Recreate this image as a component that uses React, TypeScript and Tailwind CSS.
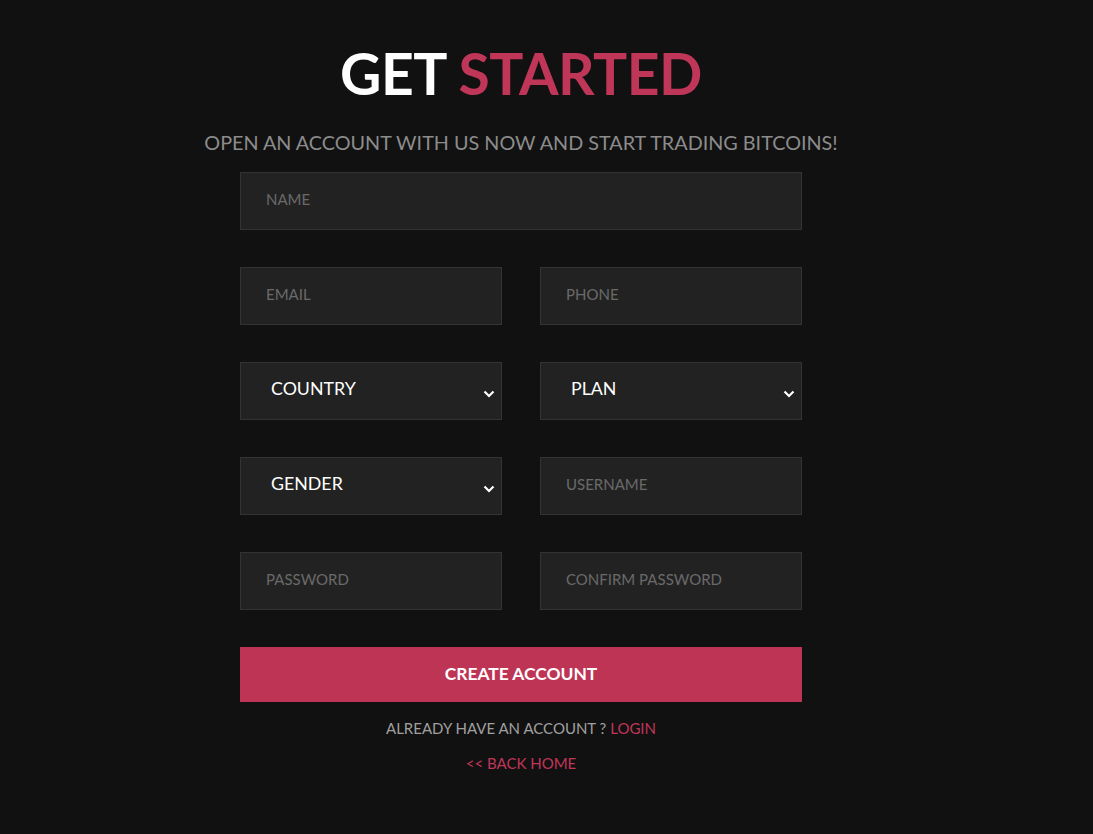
import React from "react";

const font = { fontFamily: "Lato, 'Open Sans', sans-serif" };

function Input({ label }: { label: string }) {
  return (
    <div className="h-[58px] w-full border border-[#333333] bg-[#222222] flex items-center pl-[25px] pb-[4px] text-[15px] text-[#6a6a6a]">
      {label}
    </div>
  );
}

function Select({ label }: { label: string }) {
  return (
    <div className="h-[58px] w-full border border-[#333333] bg-[#222222] flex items-center justify-between pl-[30px] pr-[6px] text-[17.8px] text-white">
      <span className="-mt-[5px]">{label}</span>
      <svg width="12" height="8" viewBox="0 0 12 8" className="mt-[5px]">
        <path d="M1.5 1.5 L6 6 L10.5 1.5" fill="none" stroke="#ffffff" strokeWidth="2.2" />
      </svg>
    </div>
  );
}

export default function App() {
  return (
    <div className="min-h-[834px] w-full bg-[#111111]" style={font}>
      <div className="w-[1042px] flex flex-col items-center pt-[37px]">
        <h1 className="text-[57px] font-bold leading-[72px] tracking-[-0.5px]">
          <span className="text-white">GET </span>
          <span className="text-[#c03659]">STARTED</span>
        </h1>
        <p className="mt-[19px] text-[19.8px] leading-[28px] text-[#8c8c8c]">
          OPEN AN ACCOUNT WITH US NOW AND START TRADING BITCOINS!
        </p>
        <div className="mt-[16px] w-[562px] flex flex-col gap-[37px]">
          <Input label="NAME" />
          <div className="grid grid-cols-2 gap-[38px]">
            <Input label="EMAIL" />
            <Input label="PHONE" />
          </div>
          <div className="grid grid-cols-2 gap-[38px]">
            <Select label="COUNTRY" />
            <Select label="PLAN" />
          </div>
          <div className="grid grid-cols-2 gap-[38px]">
            <Select label="GENDER" />
            <Input label="USERNAME" />
          </div>
          <div className="grid grid-cols-2 gap-[38px]">
            <Input label="PASSWORD" />
            <Input label="CONFIRM PASSWORD" />
          </div>
          <button className="h-[55px] w-full bg-[#be3455] text-white text-[17.4px] font-bold">
            CREATE ACCOUNT
          </button>
        </div>
        <p className="mt-[16px] text-[15px] leading-[20px] text-[#a0a0a0]">
          ALREADY HAVE AN ACCOUNT ? <span className="text-[#c03659]">LOGIN</span>
        </p>
        <p className="mt-[15px] text-[15px] leading-[20px] text-[#c03659]">&lt;&lt; BACK HOME</p>
      </div>
    </div>
  );
}
